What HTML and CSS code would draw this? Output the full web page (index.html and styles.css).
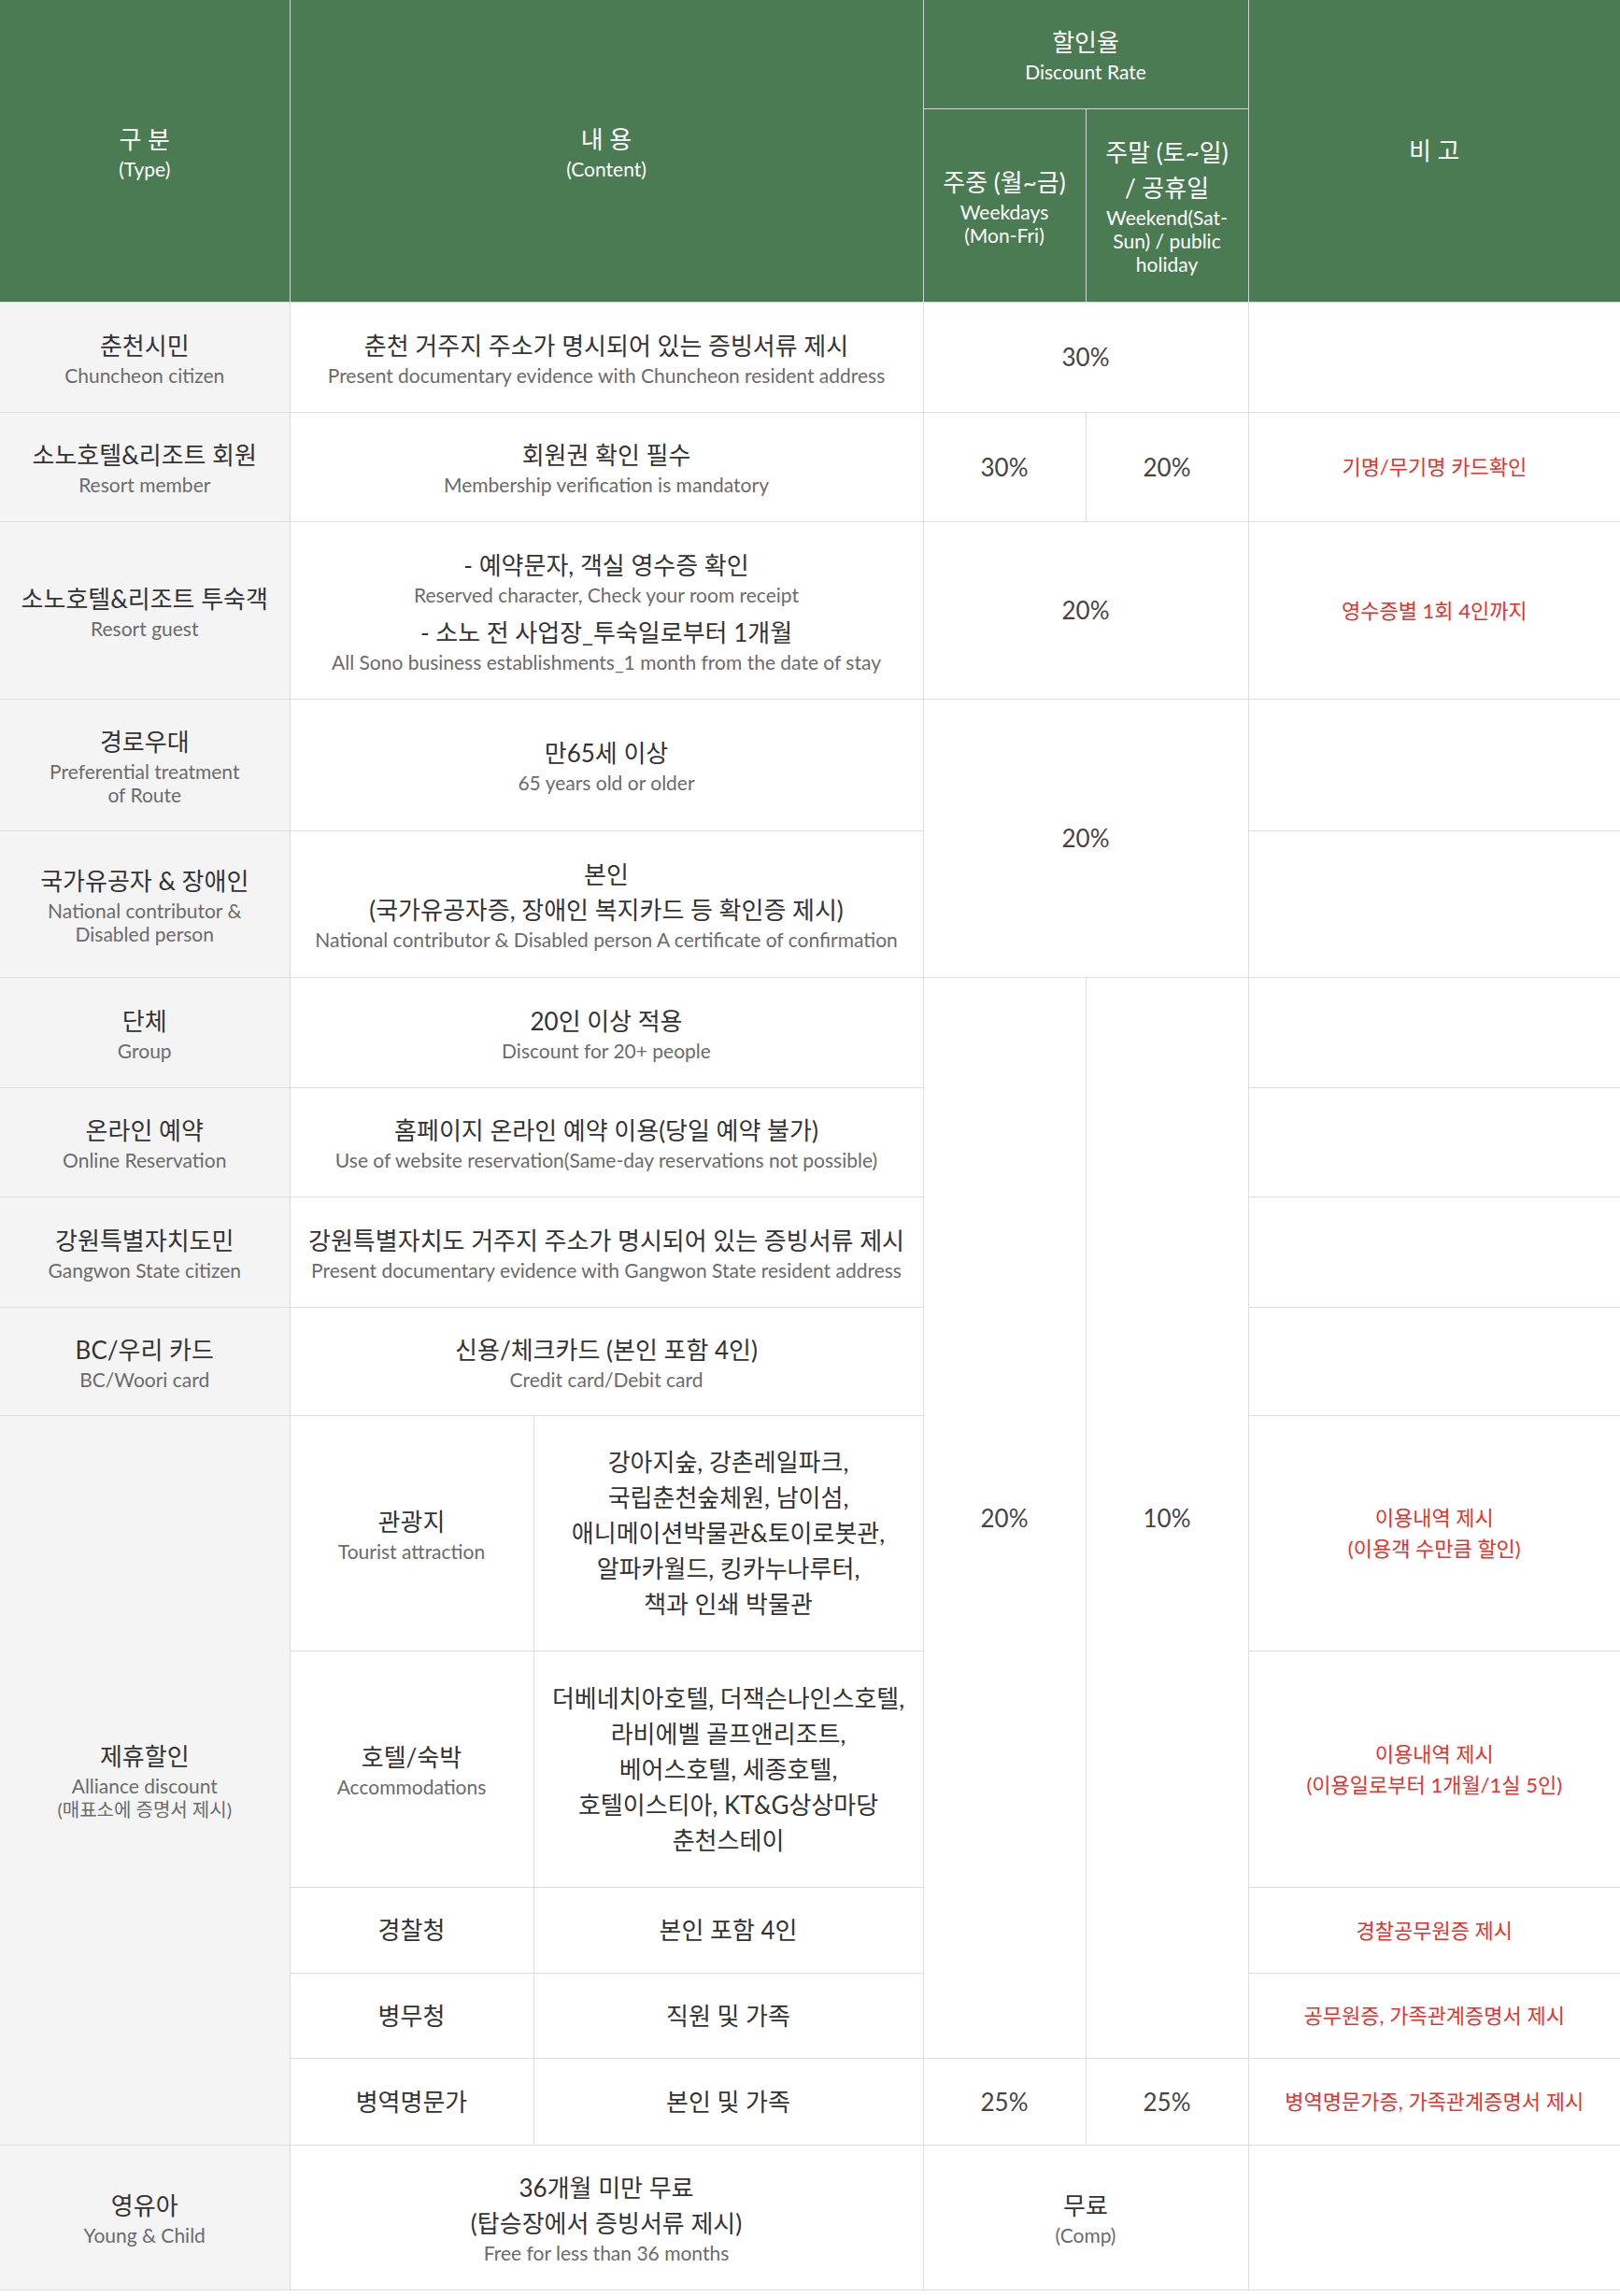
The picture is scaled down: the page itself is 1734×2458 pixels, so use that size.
FILE: index.html
```html
<!DOCTYPE html>
<html lang="ko">
<head>
<meta charset="utf-8">
<title>할인율</title>
<link rel="stylesheet" href="styles.css">
</head>
<body>
<table class="rate">
  <colgroup>
    <col class="w-type"><col class="w-sub"><col class="w-list"><col class="w-rate"><col class="w-rate"><col class="w-note">
  </colgroup>
  <thead>
    <tr class="hr1">
      <th rowspan="2"><span class="ko">구 분</span><span class="en">(Type)</span></th>
      <th rowspan="2" colspan="2"><span class="ko">내 용</span><span class="en">(Content)</span></th>
      <th colspan="2"><span class="ko">할인율</span><span class="en">Discount Rate</span></th>
      <th rowspan="2" class="hnote"><span class="ko">비 고</span></th>
    </tr>
    <tr class="hr2">
      <th class="hsub"><span class="ko">주중 (월~금)</span><span class="en">Weekdays<br>(Mon-Fri)</span></th>
      <th class="hsub"><span class="ko">주말 (토~일)<br>/ 공휴일</span><span class="en">Weekend(Sat-<br>Sun) / public<br>holiday</span></th>
    </tr>
  </thead>
  <tbody>
    <tr class="r1">
      <td class="type"><span class="ko">춘천시민</span><span class="en">Chuncheon citizen</span></td>
      <td colspan="2"><span class="ko">춘천 거주지 주소가 명시되어 있는 증빙서류 제시</span><span class="en">Present documentary evidence with Chuncheon resident address</span></td>
      <td colspan="2" class="pct">30%</td>
      <td class="note"></td>
    </tr>
    <tr class="r2">
      <td class="type"><span class="ko">소노호텔&amp;리조트 회원</span><span class="en">Resort member</span></td>
      <td colspan="2"><span class="ko">회원권 확인 필수</span><span class="en">Membership verification is mandatory</span></td>
      <td class="pct">30%</td>
      <td class="pct">20%</td>
      <td class="note">기명/무기명 카드확인</td>
    </tr>
    <tr class="r3">
      <td class="type"><span class="ko">소노호텔&amp;리조트 투숙객</span><span class="en">Resort guest</span></td>
      <td colspan="2">
        <span class="ko">- 예약문자, 객실 영수증 확인</span><span class="en">Reserved character, Check your room receipt</span>
        <span class="ko gap">- 소노 전 사업장_투숙일로부터 1개월</span><span class="en">All Sono business establishments_1 month from the date of stay</span>
      </td>
      <td colspan="2" class="pct">20%</td>
      <td class="note">영수증별 1회 4인까지</td>
    </tr>
    <tr class="r4">
      <td class="type"><span class="ko">경로우대</span><span class="en">Preferential treatment<br>of Route</span></td>
      <td colspan="2"><span class="ko">만65세 이상</span><span class="en">65 years old or older</span></td>
      <td colspan="2" rowspan="2" class="pct">20%</td>
      <td class="note"></td>
    </tr>
    <tr class="r5">
      <td class="type"><span class="ko">국가유공자 &amp; 장애인</span><span class="en">National contributor &amp;<br>Disabled person</span></td>
      <td colspan="2"><span class="ko">본인<br>(국가유공자증, 장애인 복지카드 등 확인증 제시)</span><span class="en">National contributor &amp; Disabled person A certificate of confirmation</span></td>
      <td class="note"></td>
    </tr>
    <tr class="r6">
      <td class="type"><span class="ko">단체</span><span class="en">Group</span></td>
      <td colspan="2"><span class="ko">20인 이상 적용</span><span class="en">Discount for 20+ people</span></td>
      <td rowspan="8" class="pct">20%</td>
      <td rowspan="8" class="pct">10%</td>
      <td class="note"></td>
    </tr>
    <tr class="r7">
      <td class="type"><span class="ko">온라인 예약</span><span class="en">Online Reservation</span></td>
      <td colspan="2"><span class="ko">홈페이지 온라인 예약 이용(당일 예약 불가)</span><span class="en">Use of website reservation(Same-day reservations not possible)</span></td>
      <td class="note"></td>
    </tr>
    <tr class="r8">
      <td class="type"><span class="ko">강원특별자치도민</span><span class="en">Gangwon State citizen</span></td>
      <td colspan="2"><span class="ko">강원특별자치도 거주지 주소가 명시되어 있는 증빙서류 제시</span><span class="en">Present documentary evidence with Gangwon State resident address</span></td>
      <td class="note"></td>
    </tr>
    <tr class="r9">
      <td class="type"><span class="ko">BC/우리 카드</span><span class="en">BC/Woori card</span></td>
      <td colspan="2"><span class="ko">신용/체크카드 (본인 포함 4인)</span><span class="en">Credit card/Debit card</span></td>
      <td class="note"></td>
    </tr>
    <tr class="r10">
      <td class="type" rowspan="5"><span class="ko">제휴할인</span><span class="en">Alliance discount</span><span class="small">(매표소에 증명서 제시)</span></td>
      <td><span class="ko">관광지</span><span class="en">Tourist attraction</span></td>
      <td><span class="ko">강아지숲, 강촌레일파크,<br>국립춘천숲체원, 남이섬,<br>애니메이션박물관&amp;토이로봇관,<br>알파카월드, 킹카누나루터,<br>책과 인쇄 박물관</span></td>
      <td class="note">이용내역 제시<br>(이용객 수만큼 할인)</td>
    </tr>
    <tr class="r11">
      <td><span class="ko">호텔/숙박</span><span class="en">Accommodations</span></td>
      <td><span class="ko">더베네치아호텔, 더잭슨나인스호텔,<br>라비에벨 골프앤리조트,<br>베어스호텔, 세종호텔,<br>호텔이스티아, KT&amp;G상상마당<br>춘천스테이</span></td>
      <td class="note">이용내역 제시<br>(이용일로부터 1개월/1실 5인)</td>
    </tr>
    <tr class="r12">
      <td><span class="ko">경찰청</span></td>
      <td><span class="ko">본인 포함 4인</span></td>
      <td class="note">경찰공무원증 제시</td>
    </tr>
    <tr class="r13">
      <td><span class="ko">병무청</span></td>
      <td><span class="ko">직원 및 가족</span></td>
      <td class="note">공무원증, 가족관계증명서 제시</td>
    </tr>
    <tr class="r14">
      <td><span class="ko">병역명문가</span></td>
      <td><span class="ko">본인 및 가족</span></td>
      <td class="pct">25%</td>
      <td class="pct">25%</td>
      <td class="note">병역명문가증, 가족관계증명서 제시</td>
    </tr>
    <tr class="r15">
      <td class="type"><span class="ko">영유아</span><span class="en">Young &amp; Child</span></td>
      <td colspan="2"><span class="ko">36개월 미만 무료<br>(탑승장에서 증빙서류 제시)</span><span class="en">Free for less than 36 months</span></td>
      <td colspan="2" class="pct"><span class="ko">무료</span><span class="en">(Comp)</span></td>
      <td class="note"></td>
    </tr>
  </tbody>
</table>
</body>
</html>
```

FILE: styles.css
```css
html, body {
  margin: 0;
  padding: 0;
  background: #fff;
}

body {
  font-family: Lato, "Noto Sans CJK KR", sans-serif;
  color: #333;
}

.rate {
  width: 1734px;
  border-collapse: collapse;
  table-layout: fixed;
}

.w-type { width: 310px; }
.w-sub { width: 261px; }
.w-list { width: 417px; }
.w-rate { width: 174px; }
.w-note { width: 398px; }

.rate th,
.rate td {
  padding: 0 8px;
  text-align: center;
  vertical-align: middle;
  font-weight: 400;
}

.rate th {
  background: #4b7b53;
  color: #fff;
  border: 1px solid #cfd8d0;
  border-top: 0;
}

.rate thead tr:last-child th,
.rate thead th[rowspan] {
  border-bottom: 1px solid #dddddd;
}

.rate th:first-child { border-left: 0; }
.rate th.hnote { border-right: 0; }

.rate td {
  border: 1px solid #dddddd;
  background: #fff;
}

.rate td.type {
  background: #f4f4f4;
  border-left: 0;
}

.rate td.note {
  border-right: 0;
  color: #e5322d;
  font-size: 22px;
  line-height: 33px;
}

.ko {
  display: block;
  font-size: 26px;
  line-height: 38px;
}

.en {
  display: block;
  font-size: 21px;
  line-height: 25px;
  color: #6b6b6b;
}

.rate th .en { color: #fff; }

.small {
  display: block;
  font-size: 20px;
  line-height: 26px;
  color: #6b6b6b;
}

.gap { margin-top: 9px; }

.pct {
  font-size: 26px;
  color: #444;
}

.pct .ko { color: #333; }

.hr1 { height: 116px; }
.hr2 { height: 207px; }
.r1 { height: 118px; }
.r2 { height: 117px; }
.r3 { height: 190px; }
.r4 { height: 141px; }
.r5 { height: 157px; }
.r6 { height: 118px; }
.r7 { height: 117px; }
.r8 { height: 118px; }
.r9 { height: 116px; }
.r10 { height: 252px; }
.r11 { height: 253px; }
.r12 { height: 92px; }
.r13 { height: 91px; }
.r14 { height: 93px; }
.r15 { height: 155px; }
```
